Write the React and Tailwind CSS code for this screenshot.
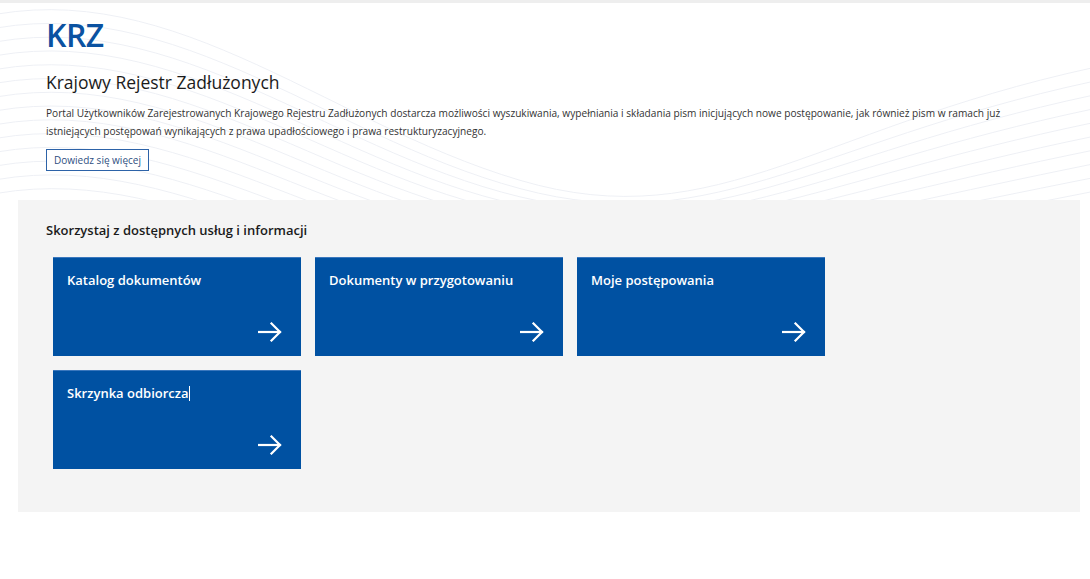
import { useState } from 'react';

const tiles = [
  { title: 'Katalog dokumentów' },
  { title: 'Dokumenty w przygotowaniu' },
  { title: 'Moje postępowania' },
  { title: 'Skrzynka odbiorcza', caret: true },
];

function ArrowIcon() {
  return (
    <svg width="24" height="20" viewBox="0 0 24 20" fill="none" stroke="white" strokeWidth="2.2" strokeLinecap="square">
      <path d="M1 10h21" />
      <path d="M13.5 1.5L22 10l-8.5 8.5" />
    </svg>
  );
}

function Waves() {
  const lines = [];
  for (let i = 0; i < 14; i++) {
    const o = i * 14;
    lines.push(
      <path
        key={i}
        d={`M-40 ${20 + o} C 160 ${-40 + o}, 320 ${120 + o}, 520 ${180 + o * 0.6} S 820 ${120 + o}, 1120 ${60 + o}`}
      />
    );
  }
  return (
    <svg
      className="absolute inset-0 w-full h-full pointer-events-none"
      viewBox="0 0 1090 200"
      preserveAspectRatio="none"
      fill="none"
      stroke="#eef0f5"
      strokeWidth="1"
    >
      {lines}
    </svg>
  );
}

function Tile({ title, caret }) {
  const [hover, setHover] = useState(false);
  return (
    <a
      href="#"
      onMouseEnter={() => setHover(true)}
      onMouseLeave={() => setHover(false)}
      className={`h-[99px] flex flex-col justify-between pl-[14px] pr-[19px] pt-[13px] pb-[14px] border-t border-[#3a77bd] ${
        hover ? 'bg-[#00478f]' : 'bg-[#0051a2]'
      }`}
    >
      <span className="text-[13px] font-semibold text-white leading-[18px]">
        {title}
        {caret && <span className="inline-block w-px h-[15px] bg-white align-[-3px]" />}
      </span>
      <span className="self-end">
        <ArrowIcon />
      </span>
    </a>
  );
}

export default function App() {
  return (
    <div
      className="min-h-screen w-full bg-white border-t-[3px] border-[#eeeeee]"
      style={{ fontFamily: '"Open Sans", "Noto Sans", sans-serif' }}
    >
      {/* Hero */}
      <div className="relative overflow-hidden h-[197px]">
        <Waves />
        <div className="relative px-[46px] pt-[12px]">
          <div className="text-[32px] font-semibold text-[#0b52a1] leading-[40px] tracking-[-0.5px]">KRZ</div>
          <h1 className="mt-[15px] text-[17.5px] font-medium text-[#1b1b1b] leading-[24px]">
            Krajowy Rejestr Zadłużonych
          </h1>
          <p className="mt-[10px] text-[10.15px] text-[#333333] leading-[18px]">
            Portal Użytkowników Zarejestrowanych Krajowego Rejestru Zadłużonych dostarcza możliwości wyszukiwania,
            wypełniania i składania pism inicjujących nowe postępowanie, jak również pism w ramach już istniejących
            postępowań wynikających z prawa upadłościowego i prawa restrukturyzacyjnego.
          </p>
          <button className="mt-[9px] h-[22px] w-[103px] border border-[#2d63a8] bg-white text-[10px] text-[#2f4f7f] leading-none">
            Dowiedz się więcej
          </button>
        </div>
      </div>

      {/* Services */}
      <div className="ml-[18px] mr-[10px] bg-[#f4f4f4] pt-[21px] pb-[43px]">
        <h2 className="pl-[28px] text-[13px] font-semibold text-[#1b1b1b] leading-[18px]">
          Skorzystaj z dostępnych usług i informacji
        </h2>
        <div className="mt-[18px] pl-[35px] grid grid-cols-[repeat(3,248px)] gap-[14px]">
          {tiles.map((t) => (
            <Tile key={t.title} {...t} />
          ))}
        </div>
      </div>
    </div>
  );
}
